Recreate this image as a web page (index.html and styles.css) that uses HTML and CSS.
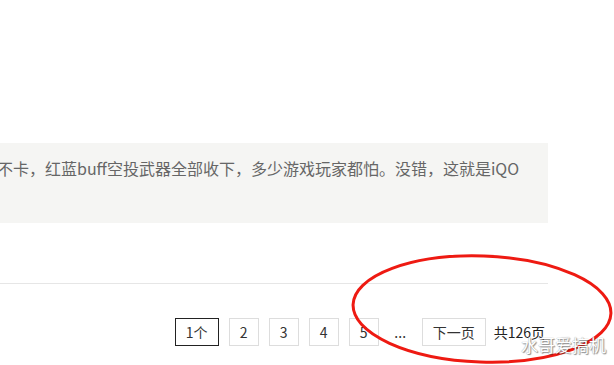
FILE: index.html
```
<!DOCTYPE html>
<html lang="zh-CN">
<head>
<meta charset="utf-8">
<title>分页</title>
<link rel="stylesheet" href="styles.css">
</head>
<body>
<div class="page">
  <div class="top-space"></div>
  <div class="quote">
    <p class="quote-text">不卡，红蓝buff空投武器全部收下，多少游戏玩家都怕。没错，这就是iQO</p>
  </div>
  <div class="divider"></div>
  <div class="pager">
    <span class="pg current">1个</span>
    <span class="pg">2</span>
    <span class="pg">3</span>
    <span class="pg">4</span>
    <span class="pg">5</span>
    <span class="dots">...</span>
    <span class="pg next">下一页</span>
    <span class="total">共126页</span>
  </div>
</div>
<svg class="mark" width="614" height="365" viewBox="0 0 614 365">
  <ellipse cx="482" cy="309" rx="129" ry="53" transform="rotate(2 482 309)" fill="none" stroke="#ee1a12" stroke-width="3"/>
</svg>
<div class="watermark">水哥爱搞机</div>
</body>
</html>
```
FILE: styles.css
```
html, body {
  margin: 0;
  padding: 0;
  background: #ffffff;
  overflow: hidden;
}
body {
  width: 614px;
  height: 365px;
  position: relative;
  font-family: "Noto Sans CJK SC", "Noto Sans", sans-serif;
}
.page {
  width: 548px;
}
.top-space {
  height: 143px;
}
.quote {
  background: #f5f5f3;
  height: 80px;
  box-sizing: border-box;
  padding-top: 13px;
  overflow: hidden;
}
.quote-text {
  margin: 0 0 0 -3px;
  white-space: nowrap;
  font-size: 16px;
  line-height: 24px;
  color: #666666;
}
.divider {
  margin-top: 60px;
  height: 1px;
  background: #e6e6e6;
}
.pager {
  margin-top: 34px;
  display: flex;
  justify-content: flex-end;
  align-items: center;
  gap: 10px;
  font-size: 14px;
}
.pg {
  box-sizing: border-box;
  height: 28px;
  min-width: 30px;
  border: 1px solid #dddddd;
  display: flex;
  align-items: center;
  justify-content: center;
  color: #333333;
  line-height: 1;
}
.pg.current {
  width: 44px;
  border-color: #222222;
}
.pg.next {
  width: 64px;
}
.dots {
  width: 23px;
  text-align: center;
  color: #333333;
}
.total {
  margin-left: -2px;
  padding-right: 3px;
  color: #222222;
}
.mark {
  position: absolute;
  left: 0;
  top: 0;
}
.watermark {
  position: absolute;
  left: 521px;
  top: 335px;
  font-size: 17px;
  line-height: 20px;
  color: #ffffff;
  text-shadow: 0 0 1px #888, 1px 1px 1px rgba(0,0,0,0.45);
}
```
